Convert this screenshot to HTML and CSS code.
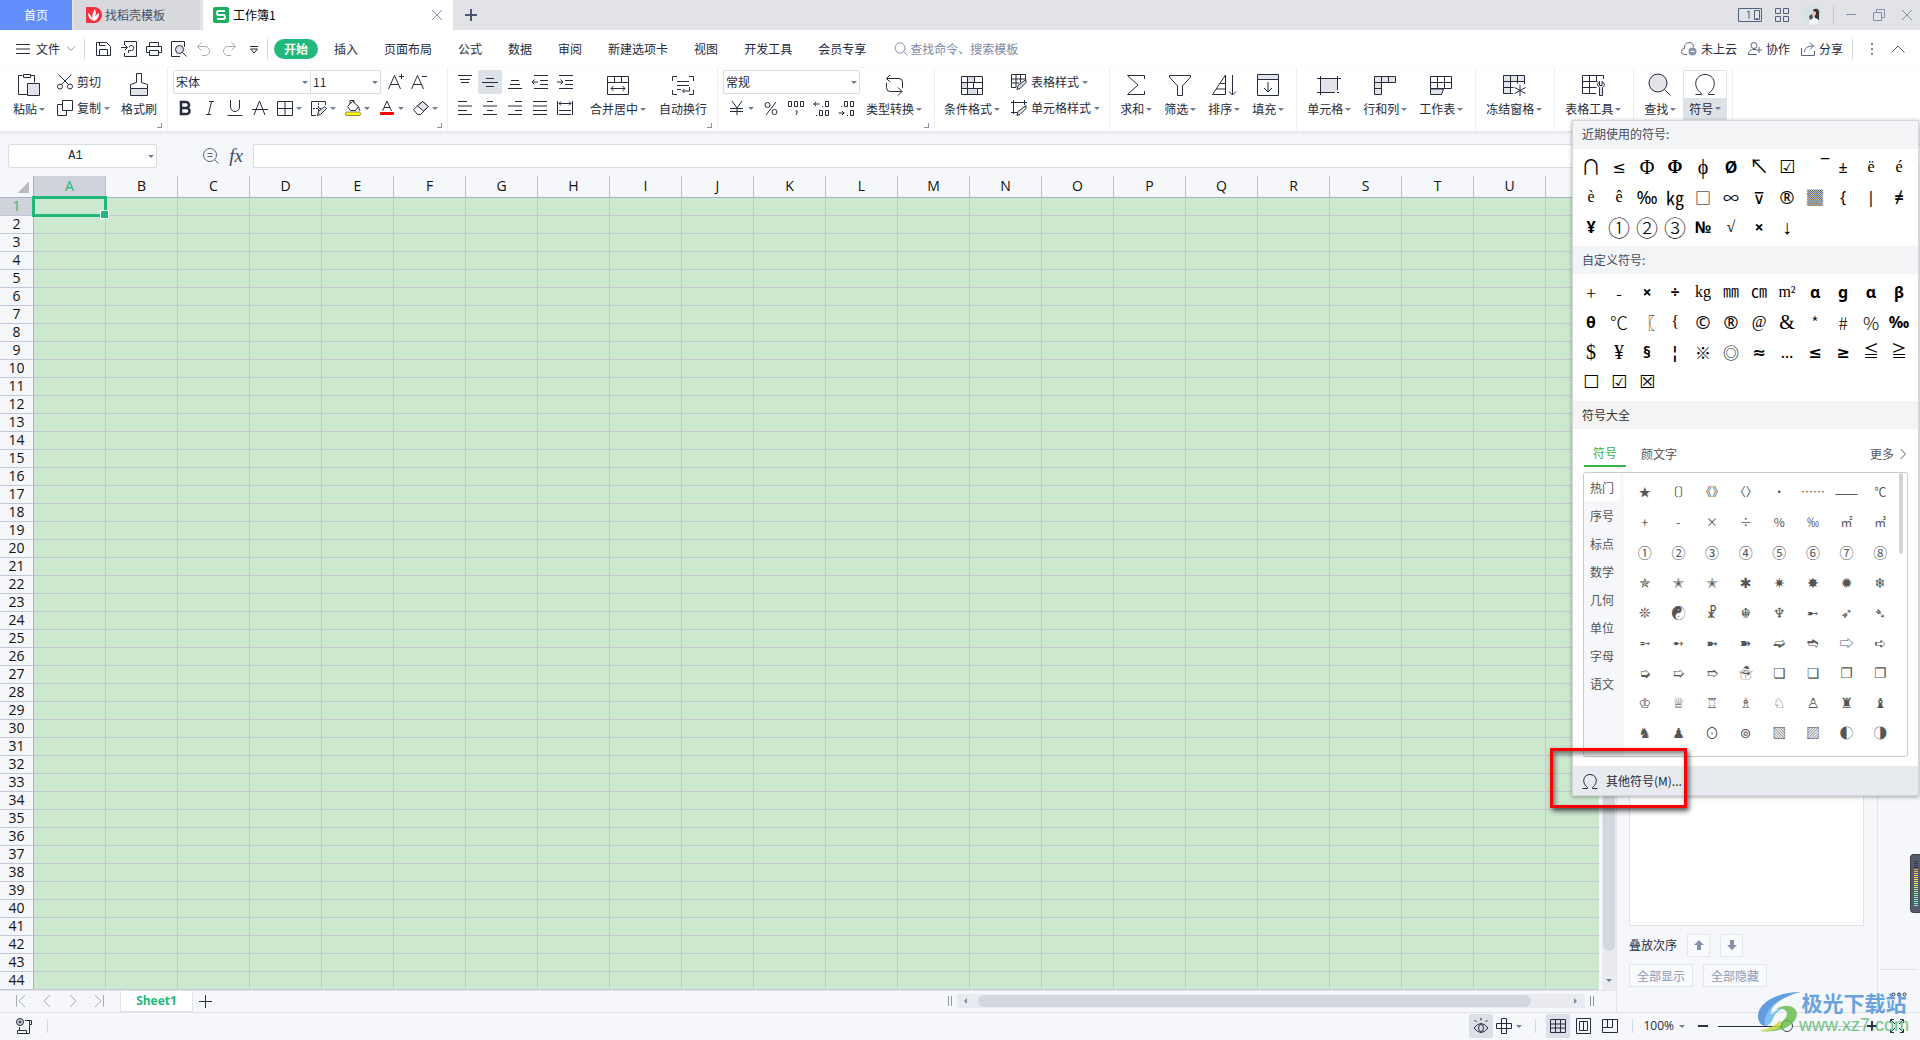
FILE: index.html
```html
<!DOCTYPE html>
<html lang="zh-CN">
<head>
<meta charset="utf-8">
<title>工作簿1</title>
<link rel="stylesheet" href="styles.css">
</head>
<body>
<div class="app">
  <header class="titlebar">
    <button class="tab tab-home">首页</button>
    <button class="tab tab-docer">
      <svg width="16" height="16" viewBox="0 0 16 16"><path d="M0 0h8a8 8 0 0 1 8 8 8 8 0 0 1-8 8H1a1 1 0 0 1-1-1z" fill="#f0303c"/><path d="M7 14C5 11 7 5 9 2c1 3 1 5 0 8 1-2 2-3 4-4 0 4-2 8-6 8zM6 13C3 12 2 9 2 6c2 1 4 3 4 7z" fill="#fff"/></svg>
      找稻壳模板</button>
    <button class="tab tab-book">
      <svg width="16" height="16" viewBox="0 0 16 16"><rect width="16" height="16" rx="2" fill="#18b05a"/><path d="M12 4H5.500Q4 4 4 6t1.500 2h5Q12 8 12 10t-1.500 2H4" fill="none" stroke="#fff" stroke-width="2"/></svg>
      <span class="tab-name">工作簿1</span>
      <svg class="thin" width="12" height="12" viewBox="0 0 12 12"><path d="M1 1l10 10M11 1L1 11"/></svg></button>
    <button class="add-tab" aria-label="新建"><svg width="12" height="12" viewBox="0 0 12 12"><path d="M6 0v12M0 6h12" stroke="#4b5773" stroke-width="2"/></svg></button>
    <div class="window-tools">
      <button aria-label="窗口"><svg width="24" height="14" viewBox="0 0 24 14"><path d="M.5.500h23v13H.500zM16.500 2.500h5v9h-5zM18 10.500h2M9 4l2-1v8" fill="none" stroke="#50607f"/></svg></button>
      <button aria-label="应用"><svg width="14" height="14" viewBox="0 0 14 14"><path d="M.5.500h5v5h-5zM8.500.500h5v5h-5zM.500 8.500h5v5h-5zM8.500 8.500h5v5h-5z" fill="none" stroke="#50607f"/></svg></button>
      <button aria-label="账号"><svg width="20" height="20" viewBox="0 0 20 20"><circle cx="10" cy="10" r="10" fill="#d5e2e6"/><path d="M11 5c4-3 7 0 6 4v6h-4c1-3-1-4-2-6z" fill="#3b3136"/><path d="M10 7c1-2 4-1 4 1s-2 4-3 3z" fill="#e9c3b4"/><path d="M7 19c0-4 3-6 6-6l3 1v4q-4 3-9 1z" fill="#f4f6f8"/><path d="M7 11l3-2 1 4-3 2z" fill="#554854"/></svg></button>
      <span class="divider"></span>
      <button aria-label="最小化"><svg class="thin" width="12" height="12" viewBox="0 0 12 12"><path d="M1 5.500h10"/></svg></button>
      <button aria-label="还原"><svg class="thin" width="12" height="12" viewBox="0 0 12 12"><path d="M.500 3.500h8v8h-8zM3.500 3.500v-3h8v8h-3"/></svg></button>
      <button aria-label="关闭"><svg class="thin" width="12" height="12" viewBox="0 0 12 12"><path d="M1 1l10 10M11 1L1 11"/></svg></button>
    </div>
  </header>

  <nav class="menubar">
    <button class="file-menu"><svg class="ink" width="14" height="10" viewBox="0 0 14 10"><path d="M0 .500h14M0 5h14M0 9.500h14"/></svg>文件
      <svg class="thin" width="10" height="6" viewBox="0 0 10 6"><path d="M1 .500l4 4 4-4"/></svg></button>
    <span class="divider"></span>
    <div class="quick">
      <button aria-label="保存"><svg class="ink" width="16" height="16" viewBox="0 0 16 16"><path d="M.500 1.500h10l4 4v9h-14zM3.500 14.500v-6h8v6M3.500 1.500v3h6"/></svg></button>
      <button aria-label="输出为PDF"><svg class="ink" width="16" height="16" viewBox="0 0 16 16"><path d="M3.500 4v-3.500h12v15h-12v-3.500M0 6.500h6M4 4l2.500 2.500L4 9M7.500 12V9.500h3a2.500 2.500 0 1 0-2.500-3.500"/></svg></button>
      <button aria-label="打印"><svg class="ink" width="16" height="16" viewBox="0 0 16 16"><path d="M3.500 5.500v-4h9v4M3.500 11.500h-3v-6h15v6h-3M3.500 9.500h9v5h-9z"/></svg></button>
      <button aria-label="打印预览"><svg class="ink" width="16" height="16" viewBox="0 0 16 16"><path d="M13.500 6V.500H.500v15H9"/><circle cx="8.500" cy="8.500" r="4" fill="#e2e4e8"/><path d="M11.500 11.500l4 4"/></svg></button>
      <button aria-label="撤销"><svg class="grey" width="16" height="16" viewBox="0 0 16 16"><path d="M5.500 1.500l-4 4 4 4M2 5.500h7a4.500 4.500 0 0 1 0 9H6"/></svg></button>
      <button aria-label="恢复"><svg class="grey" width="16" height="16" viewBox="0 0 16 16"><path d="M10.500 1.500l4 4-4 4M14 5.500H7a4.500 4.500 0 0 0 0 9h3"/></svg></button>
      <button aria-label="自定义快速访问"><svg class="ink" width="16" height="16" viewBox="0 0 16 16"><path d="M4 5.500h8M4.500 8l3.500 4 3.500-4z"/></svg></button>
    </div>
    <span class="divider"></span>
    <div class="tabs">
      <button class="active">开始</button><button>插入</button><button>页面布局</button><button>公式</button><button>数据</button><button>审阅</button><button>新建选项卡</button><button>视图</button><button>开发工具</button><button>会员专享</button>
    </div>
    <label class="search"><svg class="thin" width="14" height="14" viewBox="0 0 14 14"><circle cx="6" cy="6" r="5"/><path d="M9.500 9.500l4 4"/></svg><input type="text" placeholder="查找命令、搜索模板" aria-label="查找命令"></label>
    <div class="share-tools">
      <button><svg class="mid" width="16" height="14" viewBox="0 0 16 14"><path d="M6 12.500H3.500a3 3 0 0 1 0-6C3 2 6 .500 8 .500c3 0 4.500 2 4.500 4.500"/><circle cx="11.500" cy="9.500" r="4" fill="#8b96ad" stroke="none"/><path d="M9.500 9.500h4" stroke="#fff"/></svg>未上云</button>
      <button><svg class="mid" width="14" height="14" viewBox="0 0 14 14"><circle cx="6" cy="3.500" r="3"/><path d="M9 12.500H.500c0-4 2-5 5.500-5h2M11 5v6M8 8h6"/></svg>协作</button>
      <button><svg class="mid" width="14" height="14" viewBox="0 0 14 14"><path d="M.500 6v7.500h13V9M3.500 10c0-4 3-6 9-6M9 .500L12.500 4 9 7.500"/></svg>分享</button>
      <span class="divider"></span>
      <button aria-label="更多选项"><svg width="4" height="12" viewBox="0 0 4 12"><path d="M1 0h2v2H1zM1 5h2v2H1zM1 10h2v2H1z" fill="#7c8496"/></svg></button>
      <button aria-label="收起功能区"><svg class="mid" width="14" height="8" viewBox="0 0 14 8"><path d="M.500 7.500L7 1l6.500 6.500"/></svg></button>
    </div>
  </nav>

  <section class="ribbon">
    <div class="group g-clip">
      <button class="big"><svg class="ink" width="24" height="24" viewBox="0 0 24 24"><path d="M10 21.500H1.500v-19h4M13.500 2.500h4v7M6.500 1.500h7v3h-7z"/><path d="M10.500 10.500h12v12h-12z" fill="#e2e4e8"/></svg><span class="lbl">粘贴<i class="caret"></i></span></button>
      <div class="stack">
        <button class="small"><svg class="ink" width="16" height="16" viewBox="0 0 16 16"><circle cx="3" cy="12.500" r="2.500"/><circle cx="13" cy="12.500" r="2.500"/><path d="M1.500.500l10 10M14.500.500l-10 10"/></svg>剪切</button>
        <button class="small"><svg class="ink" width="16" height="16" viewBox="0 0 16 16"><path d="M5.500.500h10v10h-10zM5.500 4.500h-5v11h9v-5"/></svg>复制<i class="caret"></i></button>
      </div>
      <button class="big"><svg class="ink" width="24" height="24" viewBox="0 0 24 24"><path d="M3.500 15.500h17v7h-17z" fill="#e2e4e8"/><path d="M9.500 9.500v-9h5v9l6 2v4h-17v-4z"/></svg><span class="lbl">格式刷</span></button>
      <i class="corner"></i>
    </div>

    <div class="group g-font">
      <div class="stack">
        <div class="row">
          <select class="combo font-name" aria-label="字体"><option>宋体</option></select><select class="combo font-size" aria-label="字号"><option>11</option></select>
          <button aria-label="增大字号"><svg class="ink" width="16" height="16" viewBox="0 0 16 16"><path d="M.500 15L6.500 1.500 12.500 15M2.500 10.500h8M13.500 0v5M11 2.500h5"/></svg></button>
          <button aria-label="减小字号"><svg class="ink" width="16" height="16" viewBox="0 0 16 16"><path d="M.500 15L6.500 1.500 12.500 15M2.500 10.500h8M11 2.500h5"/></svg></button>
        </div>
        <div class="row icons">
          <button aria-label="加粗"><svg width="16" height="16" viewBox="0 0 16 16"><path d="M4 2h5a3 3 0 0 1 0 6H4zM4 8h5.500a3 3 0 0 1 0 6H4z" fill="none" stroke="#262b3d" stroke-width="2.500"/></svg></button>
          <button aria-label="倾斜"><svg class="ink" width="16" height="16" viewBox="0 0 16 16"><path d="M7 1.500h5M4 14.500h5M9.500 1.500l-3 13"/></svg></button>
          <button aria-label="下划线"><svg class="ink" width="16" height="16" viewBox="0 0 16 16"><path d="M3.500 0v7a4.500 4.500 0 0 0 9 0V0M.500 15.500h15"/></svg></button>
          <button aria-label="删除线"><svg class="ink" width="16" height="16" viewBox="0 0 16 16"><path d="M2 15L7.500 1 13 15M0 9.500h16"/></svg></button>
          <button aria-label="边框"><svg class="ink" width="16" height="16" viewBox="0 0 16 16"><path d="M.500 1.500h15v14h-15zM8 1.500v14M.500 8.500h15"/></svg><i class="caret"></i></button>
          <button aria-label="绘图边框"><svg class="ink" width="16" height="16" viewBox="0 0 16 16"><path d="M14.500 5V1.500H.500v14H5"/><path d="M7.500 3v8M2 8.500h8" stroke-dasharray="2 1"/><path d="M6.500 15.500l1-4 6-5 2 2-6 6z" fill="#e2e4e8"/></svg><i class="caret"></i></button>
          <button aria-label="填充颜色"><svg class="ink" width="16" height="16" viewBox="0 0 16 16"><path d="M2.500 6.500l5-5 6 5-3 4h-5zM5 4V.500h4V3M13.500 7l1.500 4"/><rect x=".500" y="12" width="15" height="3.500" rx="1.500" fill="#ff0" stroke="#8b8f50"/></svg><i class="caret"></i></button>
          <button aria-label="字体颜色"><svg class="ink" width="16" height="16" viewBox="0 0 16 16"><path d="M3.500 11L8 1l4.500 10M5 7.500h6"/><rect x="1" y="12" width="14" height="3" rx="1" fill="red" stroke="none"/></svg><i class="caret"></i></button>
          <button aria-label="清除"><svg class="ink" width="16" height="16" viewBox="0 0 16 16"><path d="M.500 9.500l9-8 6 5-8 8h-3z"/><path d="M4.500 6l5-4.500 6 5-5 4.500z" fill="#e2e4e8"/></svg><i class="caret"></i></button>
        </div>
      </div>
      <i class="corner"></i>
    </div>

    <div class="group g-align">
      <div class="stack">
        <div class="row icons">
          <button aria-label="顶端对齐"><svg class="ink" width="16" height="16" viewBox="0 0 16 16"><path d="M1 1.500h14M3 5.500h10M4 8.500h8"/></svg></button>
          <button class="pressed" aria-label="垂直居中"><svg class="ink" width="16" height="16" viewBox="0 0 16 16"><path d="M4 4.500h8M0 8.500h16M4 12.500h8"/></svg></button>
          <button aria-label="底端对齐"><svg class="ink" width="16" height="16" viewBox="0 0 16 16"><path d="M4 6.500h8M3 10.500h10M1 14.500h14"/></svg></button>
          <button aria-label="减少缩进"><svg class="ink" width="16" height="16" viewBox="0 0 16 16"><path d="M2 1.500h14M8 6.500h8M8 10.500h8M2 14.500h14M0 8h6M2.500 5.500L0 8l2.500 2.500"/></svg></button>
          <button aria-label="增加缩进"><svg class="ink" width="16" height="16" viewBox="0 0 16 16"><path d="M2 1.500h14M8 6.500h8M8 10.500h8M2 14.500h14M0 8h6M3.500 5.500L6 8l-2.500 2.500"/></svg></button>
        </div>
        <div class="row icons">
          <button aria-label="左对齐"><svg class="ink" width="16" height="16" viewBox="0 0 16 16"><path d="M1 1.500h9M1 6h14M1 10.500h9M1 14.500h14"/></svg></button>
          <button aria-label="水平居中"><svg class="ink" width="16" height="16" viewBox="0 0 16 16"><path d="M5 1.500h6M1 6h14M5 10.500h6M1 14.500h14"/></svg></button>
          <button aria-label="右对齐"><svg class="ink" width="16" height="16" viewBox="0 0 16 16"><path d="M8 1.500h7M1 6h14M8 10.500h7M1 14.500h14"/></svg></button>
          <button aria-label="两端对齐"><svg class="ink" width="16" height="16" viewBox="0 0 16 16"><path d="M1 1.500h14M1 6h14M1 10.500h14M1 14.500h14"/></svg></button>
          <button aria-label="分散对齐"><svg class="ink" width="16" height="16" viewBox="0 0 16 16"><path d="M.500 1v14M15.500 1v14M2 3.500h12M4 1.500l-2 2 2 2M12 1.500l2 2-2 2M2 10.500h12M2 14.500h12"/></svg></button>
        </div>
      </div>
      <button class="big merge"><svg class="ink" width="24" height="24" viewBox="0 0 24 24"><path d="M1.500 3.500h21v18h-21zM1.500 9.500h21M8.500 3.500v6M15.500 3.500v6M5 15.500h14M7.500 13L5 15.500 7.500 18M16.500 13l2.500 2.500-2.500 2.500"/></svg><span class="lbl">合并居中<i class="caret"></i></span></button>
      <button class="big"><svg class="ink" width="24" height="24" viewBox="0 0 24 24"><path d="M1.500 8V3.500H6M18 3.500h4.500V8M22.500 17v4.500H18M6 21.500H1.500V17M6 8.500h12M6 12.500h12M6 16.500h4M18.500 14v4h-7M13.500 16l-2 2 2 2"/></svg><span class="lbl">自动换行</span></button>
      <i class="corner"></i>
    </div>

    <div class="group g-number">
      <div class="stack">
        <select class="combo number-format" aria-label="数字格式"><option>常规</option></select>
        <div class="row icons">
          <button aria-label="货币"><svg class="ink" width="16" height="16" viewBox="0 0 16 16"><path d="M3 1l5 7 5-7M1 8.500h13M1 11.500h13M8 8v7"/></svg><i class="caret"></i></button>
          <button aria-label="百分比"><svg class="ink" width="16" height="16" viewBox="0 0 16 16"><circle cx="4.500" cy="5" r="2.500"/><circle cx="11.500" cy="12" r="2.500"/><path d="M13 2L3 15"/></svg></button>
          <button aria-label="千位分隔"><svg class="ink" width="16" height="16" viewBox="0 0 16 16"><path d="M.500 1.500h3v5h-3zM6.500 1.500h3v5h-3zM12.500 1.500h3v5h-3zM7.500 11h1.500v2l-1 2"/></svg></button>
          <button aria-label="增加小数位"><svg class="ink" width="16" height="16" viewBox="0 0 16 16"><path d="M.500 4h6M3 2L1 4l2 2M9 6.500h1M12.500 1.500h3v5h-3zM3 15.500h1M6.500 10.500h3v5h-3zM12.500 10.500h3v5h-3z"/></svg></button>
          <button aria-label="减少小数位"><svg class="ink" width="16" height="16" viewBox="0 0 16 16"><path d="M3 6.500h1M6.500 1.500h3v5h-3zM12.500 1.500h3v5h-3zM.500 13h6M4 11l2 2-2 2M9 15.500h1M12.500 10.500h3v5h-3z"/></svg></button>
        </div>
      </div>
      <button class="big"><svg class="ink" width="24" height="24" viewBox="0 0 24 24"><path d="M8 2L4.500 5.500 8 9M5 5.500h12q3.500 0 3.500 3.500v6M16 14.500l4 4-4 4M20 18.500H8q-3.500 0-3.500-4V10"/></svg><span class="lbl">类型转换<i class="caret"></i></span></button>
      <i class="corner"></i>
    </div>

    <div class="group g-style">
      <button class="big"><svg class="ink" width="24" height="24" viewBox="0 0 24 24"><path d="M8 3h7v6H8zM2 9h5v6H2zM8 15h8v6H8z" fill="#dcdee3" stroke="none"/><path d="M1.500 3.500h21v18h-21zM1.500 9.500h21M1.500 15.500h21M7.500 3.500v18M14.500 3.500v6M17.500 15.500v6M13.500 9.500v6"/></svg><span class="lbl">条件格式<i class="caret"></i></span></button>
      <div class="stack">
        <button class="small"><svg class="ink" width="16" height="16" viewBox="0 0 16 16"><path d="M14.500 5V.500H.500v13H5M.500 5h14M.500 9h8M5 .500v13M9.500.500v8"/><path d="M6 15.500l1-4 8-6v3l-6 6z" fill="#e2e4e8"/></svg>表格样式<i class="caret"></i></button>
        <button class="small"><svg class="ink" width="16" height="16" viewBox="0 0 16 16"><path d="M0 2.500h16M2.500 0v14M13.500 0v5M0 12.500h6"/><path d="M6 15.500l1-4 8-6v3l-6 6z" fill="#e2e4e8"/></svg>单元格样式<i class="caret"></i></button>
      </div>
    </div>

    <div class="group g-edit">
      <button class="big"><svg class="ink" width="24" height="24" viewBox="0 0 24 24"><path d="M20.500 6V2.500h-17L14 12 3.500 21.500h17V18"/></svg><span class="lbl">求和<i class="caret"></i></span></button>
      <button class="big"><svg class="ink" width="24" height="24" viewBox="0 0 24 24"><path d="M1.500 2.500h21V4L14.500 13v9.500h-5V13L1.500 4z"/></svg><span class="lbl">筛选<i class="caret"></i></span></button>
      <button class="big"><svg class="ink" width="24" height="24" viewBox="0 0 24 24"><path d="M.500 21.500L13.500 2v19.500zM4.500 16h9M8 10.500h5.500M20.500 2v20M17 18.500l3.500 3.500 3.500-3.500"/></svg><span class="lbl">排序<i class="caret"></i></span></button>
      <button class="big"><svg class="ink" width="24" height="24" viewBox="0 0 24 24"><path d="M1.500 1.500h21v5h-21z" fill="#e2e4e8"/><path d="M1.500 6.500h21v16h-21zM12 9v10M8 15l4 4 4-4"/></svg><span class="lbl">填充<i class="caret"></i></span></button>
    </div>

    <div class="group g-edit">
      <button class="big"><svg class="ink" width="24" height="24" viewBox="0 0 24 24"><path d="M4 6h17v13H4z" fill="#e2e4e8" stroke="none"/><path d="M0 5.500h24M3.500 3v19M20.500 3v14M0 19.500h18M20 19.500h2"/></svg><span class="lbl">单元格<i class="caret"></i></span></button>
      <button class="big"><svg class="ink" width="24" height="24" viewBox="0 0 24 24"><path d="M1.500 3.500h21v6h-14v12h-7z" fill="#e2e4e8"/><path d="M8.500 3.500v6M15.500 3.500v6M1.500 9.500h7M1.500 15.500h7"/></svg><span class="lbl">行和列<i class="caret"></i></span></button>
      <button class="big"><svg class="ink" width="24" height="24" viewBox="0 0 24 24"><path d="M1.500 16h13l-2 5.500h-11z" fill="#e2e4e8"/><path d="M1.500 3.500h21v12h-21zM1.500 9.500h21M8.500 3.500v12M15.500 3.500v12"/></svg><span class="lbl">工作表<i class="caret"></i></span></button>
    </div>

    <div class="group g-edit">
      <button class="big"><svg class="ink" width="24" height="24" viewBox="0 0 24 24"><path d="M1 3h21v6H8v12H1z" fill="#e2e4e8" stroke="none"/><path d="M22.500 11V2.500h-21v18H11M1.500 8.500h21M1.500 14.500h10M8.500 2.500v18M15.500 2.500v8M18 12v11M12.500 14.500l11 6M23.500 14.500l-11 6"/></svg><span class="lbl">冻结窗格<i class="caret"></i></span></button>
    </div>
    <div class="group g-edit">
      <button class="big"><svg class="ink" width="24" height="24" viewBox="0 0 24 24"><path d="M22.500 6V2.500h-21v18H15M1.500 8.500h15M1.500 14.500h14M8.500 2.500v18M15.500 2.500v6"/><path d="M18.500 22.500v-8c-3-2-2-5 0-6v4h2.500v-4c3 1 3 5 .500 6v8z" fill="#e2e4e8"/></svg><span class="lbl">表格工具<i class="caret"></i></span></button>
    </div>
    <div class="group g-symbol">
      <button class="big"><svg class="ink" width="24" height="24" viewBox="0 0 24 24"><circle cx="10" cy="10" r="9" fill="#e2e4e8"/><path d="M16.500 16.500l6 6"/></svg><span class="lbl">查找<i class="caret"></i></span></button>
      <button class="big open"><svg class="ink" width="24" height="24" viewBox="0 0 24 24"><path d="M2.500 21.500h6v-1C-1 14 2 1.500 12 1.500S25 14 15.500 20.500v1h6"/></svg><span class="lbl">符号<i class="caret"></i></span></button>
    </div>
  </section>

  <div class="formula-bar">
    <input class="name-box" type="text" value="A1" aria-label="名称框">
    <svg class="mid lookup" width="16" height="16" viewBox="0 0 16 16"><circle cx="7" cy="7" r="6.500"/><path d="M4.500 5.500h5M4.500 8.500h5M11.500 11.500l4 4"/></svg>
    <button class="fx" aria-label="插入函数">fx</button>
    <input class="formula" type="text" aria-label="编辑栏">
  </div>

  <main class="work">
    <section class="sheet">
      <div class="sheet-body">
        <div class="grid-wrap"><table class="grid"><thead><tr id="cols"><th class="select-all"></th></tr></thead><tbody id="rows"></tbody></table></div>
        <div class="vscroll"><span class="thumb"></span><i class="caret"></i></div>
      </div>
      <div class="sheet-bar">
        <div class="sheet-nav">
          <button aria-label="第一个"><svg class="grey" width="10" height="12" viewBox="0 0 10 12"><path d="M.500 0v12M9 0L3 6l6 6"/></svg></button>
          <button aria-label="上一个"><svg class="grey" width="10" height="12" viewBox="0 0 10 12"><path d="M8 0L2 6l6 6"/></svg></button>
          <button aria-label="下一个"><svg class="grey" width="10" height="12" viewBox="0 0 10 12"><path d="M2 0l6 6-6 6"/></svg></button>
          <button aria-label="最后一个"><svg class="grey" width="10" height="12" viewBox="0 0 10 12"><path d="M9.500 0v12M1 0l6 6-6 6"/></svg></button>
        </div>
        <button class="sheet-tab">Sheet1</button>
        <button class="add-sheet" aria-label="新建工作表"><svg class="ink" width="13" height="13" viewBox="0 0 13 13"><path d="M6.500 0v13M0 6.500h13"/></svg></button>
        <div class="hscroll-area"><i class="grip"></i><div class="hscroll"><i class="left"></i><span class="thumb"></span><i class="right"></i></div><i class="grip"></i></div>
      </div>
    </section>
    <aside class="pane">
      <div class="object-list"></div>
      <div class="order"><span>叠放次序</span>
        <button aria-label="上移"><svg width="10" height="10" viewBox="0 0 10 10"><path d="M5 0l5 5H7v5H3V5H0z" fill="#8792a6"/></svg></button>
        <button aria-label="下移"><svg width="10" height="10" viewBox="0 0 10 10"><path d="M5 10l5-5H7V0H3v5H0z" fill="#8792a6"/></svg></button></div>
      <div class="visibility"><button>全部显示</button><button>全部隐藏</button></div>
    </aside>
    <aside class="strip"><button aria-label="更多"><svg class="ink" width="16" height="5" viewBox="0 0 16 5"><circle cx="2.500" cy="2.500" r="1.500"/><circle cx="8" cy="2.500" r="1.500"/><circle cx="13.500" cy="2.500" r="1.500"/></svg></button></aside>
  </main>

  <footer class="status">
    <button class="record" aria-label="录制"><svg class="ink" width="16" height="16" viewBox="0 0 16 16"><circle cx="4" cy="4" r="3.500" fill="#cfd3db"/><circle cx="4" cy="4" r="1"/><path d="M9 2.500h6.500v4h-2v9h-12v-3h9v3M3.500 9v3.500M13.500 6.500v-4"/></svg></button>
    <span class="divider"></span>
    <div class="view-tools">
      <button class="on" aria-label="护眼模式"><svg class="ink" width="16" height="16" viewBox="0 0 16 16"><path d="M1 10q7-9 14 0-7 9-14 0zM8 0v2.500M1.500 2l2 2M14.500 2l-2 2"/><ellipse cx="8" cy="10" rx="2.500" ry="3.500"/></svg></button>
      <button class="cross" aria-label="阅读模式"><svg class="ink" width="16" height="16" viewBox="0 0 16 16"><path d="M5.500.500h5v15h-5zM.500 5.500h15v5H.500z"/></svg><i class="caret"></i></button>
      <span class="divider"></span>
      <button class="on" aria-label="普通视图"><svg class="ink" width="16" height="14" viewBox="0 0 16 14"><path d="M.500.500h15v13H.500zM.500 5h15M.500 9h15M5.500.500v13M10.500.500v13"/></svg></button>
      <button aria-label="分页预览"><svg class="ink" width="16" height="16" viewBox="0 0 16 16"><path d="M.500.500h14v15H.500zM3.500 3.500h8v9h-8zM7.500 3.500v9"/></svg></button>
      <button aria-label="页面布局"><svg class="ink" width="16" height="14" viewBox="0 0 16 14"><path d="M.500.500h15v13H.500zM5.500.500v8M10.500.500v8M.500 8.500h10"/></svg></button>
      <span class="divider before-zoom"></span>
      <button class="zoom">100%<i class="caret"></i></button>
      <button class="minus" aria-label="缩小"><svg width="10" height="10" viewBox="0 0 10 10"><path d="M0 5h10" stroke="#2b3349" stroke-width="2"/></svg></button>
      <input type="range" min="0" max="100" value="46" aria-label="缩放">
      <button aria-label="放大"><svg width="10" height="10" viewBox="0 0 10 10"><path d="M0 5h10M5 0v10" stroke="#2b3349" stroke-width="2"/></svg></button>
      <button class="full" aria-label="全屏"><svg class="ink" width="14" height="14" viewBox="0 0 14 14"><path d="M.500 4V.500H4M10 .500h3.500V4M13.500 10v3.500H10M4 13.500H.500V10M1 1l4 4M13 1L9 5M1 13l4-4M13 13L9 9"/></svg></button>
    </div>
  </footer>

  <div class="popup">
    <h2>近期使用的符号:</h2>
    <div class="symbols" id="recent"></div>
    <h2>自定义符号:</h2>
    <div class="symbols" id="custom"></div>
    <h2 class="all-title">符号大全</h2>
    <div class="lib-tabs"><button class="current">符号</button><button>颜文字</button><a href="#more">更多<svg width="6" height="12" viewBox="0 0 6 12"><path d="M.500 1l5 5-5 5" fill="none" stroke="#666"/></svg></a></div>
    <div class="library">
      <div class="cats"><button class="current">热门</button><button>序号</button><button>标点</button><button>数学</button><button>几何</button><button>单位</button><button>字母</button><button>语文</button></div>
      <div class="glyphs" id="glyphs"></div>
      <span class="lib-thumb"></span>
    </div>
    <button class="other"><svg class="ink" width="16" height="16" viewBox="0 0 16 16"><path d="M.500 15.500h5v-1C-1 9.500 1.500 1.500 8 1.500S17 9.500 10.500 14.500v1h5"/></svg>其他符号(M)...</button>
    <span class="marker"></span>
  </div>

  <div class="meter"><i></i></div>
  <div class="watermark">
    <svg width="44" height="42" viewBox="0 0 44 42"><path d="M43 1C20 1 1 12 1 25c0 6 3 10 8 10C5 24 17 8 43 1z" fill="#3f87d9"/><path d="M43 1C26 5 13 14 14 24c4-5 10-8 16-9-8 4-13 8-14 13-1 3-4 6-7 7C5 20 20 6 43 1z" fill="#62b4ee"/><path d="M19 18c14-8 24 0 20 9C35 37 19 42 3 40c13-3 26-9 27-17 0-4-4-6-11-5z" fill="#62bb46"/><path d="M3 40c11-3 16-6 20-11l1 6c-5 4-13 6-21 5z" fill="#c6d93a"/></svg>
    <div><b>极光下载站</b><span>www.xz7.com</span></div>
  </div>
</div>
<script src="app.js"></script>
</body>
</html>
```
FILE: app.js
```js
const el = (tag, cls, text) => {
  const node = document.createElement(tag);
  if (cls) node.className = cls;
  if (text) node.textContent = text;
  return node;
};

// Sheet grid
const letters = 'ABCDEFGHIJKLMNOPQRSTUV'.split('');
const cols = document.getElementById('cols');
letters.forEach((c, i) => cols.append(el('th', i ? '' : 'sel', c === 'V' ? '' : c)));
const rows = document.getElementById('rows');
for (let r = 1; r <= 44; r++) {
  const tr = el('tr');
  tr.append(el('th', r === 1 ? 'sel' : '', String(r)));
  letters.forEach((c, i) => tr.append(el('td', r === 1 && i === 0 ? 'cursor' : '')));
  rows.append(tr);
}

// Symbol lists, "glyph/class": s serif, sl large serif, n sans, b bold, l circled, m plain, w fullwidth
const fill = (id, list) => {
  const box = document.getElementById(id);
  list.split(' ').forEach(item => {
    const [text, cls] = item.split('/');
    box.append(el('button', cls, text));
  });
};
fill('recent', '∩/big-n ≤/n Φ/sl Φ/sb ϕ/sl Ø/b ↖/sl ☑/box ‾/top ±/n ë/s é/s ' +
  'è/s ê/s ‰/n2 ㎏/kg □/m ∞/m ⊽/m ®/n2 ▓/m {/n |/n ≠/b ¥/b ①/l ②/l ③/l №/b √/s ×/b ↓/sl');
fill('custom', '+/w -/w ×/b ÷/b kg/s ㎜/s ㎝/s m²/s ɑ/b ɡ/b α/b β/b ' +
  'θ/b ℃/w 〖/m {/s ©/n2 ®/n2 @/s &/sl */w #/w %/w ‰/b ' +
  '$/sl ¥/sl §/b ¦/b ※/m ◎/m ≈/b …/n ≤/b ≥/b ≦/s ≧/s ☐/box ☑/box ☒/box');
fill('glyphs', '★ 〔〕 《》 〈〉 · …… ——/dash ℃ + - × ÷ % ‰ ㎡ ㎥ ① ② ③ ④ ⑤ ⑥ ⑦ ⑧ ✯ ✭ ✭ ✱ ✷ ✸ ✹ ❄ ' +
  '❊ ☯ ☧ ☬ ♆ ➸ ➶ ➴ ➵ ➻ ➼ ➽ ➫ ➬ ⇨ ➪ ➭ ➯ ➱ ☃ ❏ ❏ ❐ ❐ ♔ ♕ ♖ ♗ ♘ ♙ ♜ ♝ ♞ ♟ ⊙ ⊚ ▧ ▨ ◐ ◑ ▬ ·');
```
FILE: styles.css
```css
* { box-sizing: border-box; }
body { margin: 0; overflow: hidden; color: #262b3d; font: 12px/16px "Noto Sans CJK SC", "Noto Sans", sans-serif; }
button, input, select { margin: 0; padding: 0; border: 0; background: none; color: inherit; font: inherit; outline: 0; }
button { display: flex; align-items: center; justify-content: center; white-space: nowrap; flex: none; }
svg { display: block; flex: none; overflow: visible; }
.ink { fill: none; stroke: #262b3d; }
.thin { fill: none; stroke: #8490ad; }
.mid { fill: none; stroke: #59637a; }
.grey { fill: none; stroke: #a9acb3; }
.app { position: relative; display: flex; flex-direction: column; height: 100vh; min-height: 700px; background: #f5f7fa; overflow: hidden; }
.divider { width: 1px; height: 20px; background: #d5d8de; flex: none; }
.caret { width: 0; height: 0; border: 3px solid transparent; border-top-color: #6f7c95; border-bottom: 0; flex: none; }

.titlebar { display: flex; height: 30px; background: #e2e3e7; flex: none; }
.tab-home { width: 72px; background: #618efb; color: #fff; }
.tab-docer { width: 126px; margin-left: 2px; padding-left: 12px; gap: 3px; justify-content: flex-start; background: #d8d9dc; color: #4a5062; }
.tab-book { width: 250px; margin-left: 3px; padding: 0 10px; gap: 4px; background: #fff; color: #000; }
.tab-name { flex: 1; text-align: left; }
.add-tab { width: 36px; }
.window-tools { display: flex; align-items: center; margin-left: auto; padding-right: 7px; gap: 13px; }
.window-tools .divider { margin: 0 -2px 0 -2px; background: #c6c9d0; }
.window-tools .divider ~ button + button { margin-left: 3px; }

.menubar { display: flex; align-items: center; height: 38px; padding-bottom: 1px; background: #fff; flex: none; }
.file-menu { gap: 6px; padding: 0 8px 0 16px; }
.quick { display: flex; gap: 9px; padding: 0 5px 0 11px; }
.tabs { display: flex; align-items: center; gap: 26px; margin-left: 6px; }
.tabs .active { width: 44px; height: 20px; margin-right: -10px; border-radius: 10px; background: #21b97b; color: #fff; font-weight: bold; }
.search { display: flex; align-items: center; gap: 2px; margin-left: 28px; }
.search input { width: 150px; }
.search input::placeholder { color: #7b88a5; opacity: 1; }
.share-tools { display: flex; align-items: center; gap: 11px; margin-left: auto; padding-right: 15px; }
.share-tools button { gap: 4px; }
.share-tools .divider { margin-left: -2px; }
.share-tools .divider + button { margin: 0 6px; }

.ribbon { display: flex; height: 64px; background: #fff; border-bottom: 1px solid #e3e5e9; box-shadow: 0 1px 3px #dfe2e7; flex: none; }
.group { position: relative; display: flex; align-items: flex-start; height: 62px; padding-top: 2px; border-right: 1px solid #eceef1; flex: none; }
.corner { position: absolute; right: 5px; bottom: 2px; width: 5px; height: 5px; border: solid #8791a8; border-width: 0 1px 1px 0; }
.big { flex-direction: column; height: 50px; padding-top: 3px; gap: 1px; }
.lbl { display: flex; align-items: center; gap: 2px; height: 22px; }
.stack { display: flex; flex-direction: column; gap: 2px; }
.stack > *, .row { height: 24px; }
.small { justify-content: flex-start; gap: 4px; }
.small .caret { margin-left: -1px; }
.row { display: flex; align-items: center; gap: 8px; }
.icons { gap: 9px; }
.icons button { gap: 3px; }
.icons .pressed { width: 24px; height: 24px; margin: 0 -4px; border-radius: 2px; background: #dce2e6; }
.g-clip { padding-left: 13px; padding-right: 10px; gap: 11px; }
.g-clip .stack { margin-left: 1px; }
.g-clip .small { gap: 4px; }
.g-font { padding-left: 5px; padding-right: 9px; }
.g-font .row { gap: 7px; }
.g-font .icons { gap: 9px; padding-left: 4px; }
.g-align { padding-left: 9px; padding-right: 10px; gap: 13px; }
.merge { margin-left: 4px; }
.g-number { padding-left: 5px; padding-right: 12px; gap: 6px; }
.g-number .icons { padding-left: 6px; }
.g-style { padding-left: 9px; padding-right: 9px; gap: 11px; }
.g-edit { padding-left: 10px; padding-right: 12px; gap: 12px; }
.g-symbol { padding-left: 10px; padding-right: 5px; gap: 7px; }
.open { width: 44px; border: 1px solid #dce2e6; padding-top: 2px; border-radius: 2px 2px 0 0; background: linear-gradient(#fff 27px, #dce2e6 27px); }
.combo, .name-box { height: 24px; border: 1px solid #d9dce2; border-radius: 2px; background: #fff url("data:image/svg+xml,%3Csvg xmlns='http://www.w3.org/2000/svg' width='6' height='3'%3E%3Cpath d='M0 0h6L3 3z' fill='%236f7c95'/%3E%3C/svg%3E") no-repeat right 2px center; }
.combo { appearance: none; padding-left: 2px; }
.font-name { width: 138px; border-radius: 2px 0 0 2px; }
.font-size { width: 71px; margin-left: -8px; border-radius: 0 2px 2px 0; }
.number-format { width: 137px; }

.formula-bar { display: flex; align-items: flex-start; height: 44px; padding: 12px 0 0 8px; flex: none; }
.name-box { width: 149px; padding-right: 14px; text-align: center; font-family: "Liberation Mono", monospace; }
.lookup { margin: 4px 0 0 46px; }
.fx { width: 34px; height: 24px; font: italic 19px "Liberation Serif", serif; color: #3e4860; }
.formula { flex: 1; height: 24px; border: 1px solid #d9dce2; border-right: 0; border-radius: 2px 0 0 2px; background: #fff; }

.work { display: flex; flex: 1; min-height: 0; }
.sheet { display: flex; flex-direction: column; flex: 1; min-width: 0; }
.sheet-body { display: flex; flex: 1; min-height: 0; }
.grid-wrap { flex: 1; overflow: hidden; }
.grid { width: 1618px; table-layout: fixed; border-collapse: separate; border-spacing: 0; font: 14px/16px "Open Sans", "Noto Sans", sans-serif; color: #111; }
.grid th, .grid td { width: 72px; height: 18px; padding: 0; border: solid #c3c8d9; border-width: 0 1px 1px 0; font-weight: normal; text-align: center; vertical-align: top; }
.grid td { background: #cce8cf; }
.grid thead th { height: 22px; line-height: 20px; border-bottom-color: #a9b0c6; border-right-color: #b9bfcf; }
.grid tr th:first-child { width: 34px; border-right-color: #a9b0c6; }
.grid th.select-all { border-right-color: transparent; background: linear-gradient(135deg, transparent 50%, #b9bbbf 50%) 18px 6px / 11px 11px no-repeat; }
.grid th.sel { background: #d0d3dc; color: #21b97b; }
.cursor { position: relative; }
.cursor::before { content: ""; position: absolute; inset: -2px; border: 3px solid #21b97b; }
.cursor::after { content: ""; position: absolute; right: -4px; bottom: -4px; width: 7px; height: 7px; border: 1px solid #fff; background: #21b97b; }
.vscroll { display: flex; flex-direction: column; align-items: center; width: 14px; margin-left: 3px; padding-bottom: 8px; background: #e9ebf0; flex: none; }
.vscroll .thumb { width: 12px; flex: 1; margin-bottom: 28px; border-radius: 6px; background: #d3d6df; }
.sheet-bar { display: flex; height: 22px; border-top: 1px solid #e1e3e8; flex: none; }
.sheet-nav { display: flex; gap: 16px; width: 120px; padding: 0 0 1px 16px; }
.sheet-tab { width: 73px; background: #fff; border: solid #e1e3e8; border-width: 0 1px 1px; color: #21b97b; font: bold 12px/20px "Open Sans", sans-serif; }
.add-sheet { width: 24px; padding-bottom: 1px; }
.hscroll-area { display: flex; align-items: center; gap: 5px; width: 668px; margin-left: auto; padding: 0 22px 1px 0; }
.grip { width: 4px; height: 10px; border: solid #8d98ae; border-width: 0 1px; }
.hscroll { display: flex; align-items: center; flex: 1; height: 14px; padding: 0 8px 0 7px; background: #e9ebf0; }
.hscroll .thumb { flex: 1; height: 12px; margin: 0 43px 0 11px; border-radius: 6px; background: #d5d7e0; }
.left, .right { border: 3px solid transparent; border-left: 0; border-right-color: #7f8cab; }
.right { border: 3px solid transparent; border-right: 0; border-left-color: #7f8cab; }
.pane { display: flex; flex-direction: column; gap: 8px; width: 262px; padding: 8px 13px 25px 12px; border: solid #e1e3e8; border-width: 0 1px; flex: none; }
.object-list { flex: 1; border: 1px solid #dfe2e8; border-radius: 2px; background: #fff; }
.order, .visibility { display: flex; align-items: center; gap: 10px; }
.order { height: 22px; }
.order button { width: 23px; height: 23px; border: 1px solid #e3e6ea; background: #f9fafc; }
.visibility button { width: 64px; height: 23px; border: 1px solid #e3e6ea; background: #f9fafc; color: #8f9bb0; }
.strip { display: flex; flex-direction: column; justify-content: flex-end; align-items: center; width: 42px; padding: 0 2px 16px; flex: none; }
.strip button { width: 38px; height: 27px; padding-top: 22px; border-top: 1px solid #e1e3e8; }

.status { display: flex; align-items: center; height: 28px; padding-bottom: 1px; border-top: 1px solid #e1e3e8; flex: none; }
.status .divider { height: 14px; }
.record { margin: 0 15px 0 16px; }
.view-tools { display: flex; align-items: center; gap: 10px; margin-left: auto; padding-right: 16px; }
.view-tools .on { width: 24px; height: 24px; margin-right: -4px; border-radius: 2px; background: #dbdfe7; }
.cross { gap: 4px; margin: 0 3px 0 -3px; }
.view-tools .before-zoom { margin-left: 4px; }
.zoom { gap: 5px; font-family: "Open Sans", sans-serif; }
.minus { margin-left: 3px; }
input[type=range] { appearance: none; width: 149px; height: 12px; margin-right: -10px; background: linear-gradient(90deg, #262b3d 46%, #c6ccd8 46%) center / 100% 1px no-repeat; }
input[type=range]::-webkit-slider-thumb { appearance: none; width: 12px; height: 12px; border: 1px solid #444; border-radius: 6px; background: #f5f7fa; }
.full { margin-left: 3px; }

.popup { position: absolute; top: 120px; right: 1px; width: 347px; border: 1px solid #d5d7db; background: #fff; box-shadow: 0 1px 4px rgba(0, 0, 0, .35); }
.popup h2 { margin: 0; height: 28px; padding: 4px 9px; background: #f3f4f6; color: #454d61; font-size: 12px; font-weight: normal; line-height: 20px; }
.popup h2:first-child { line-height: 18px; }
.popup h2.all-title { background: #f4f4f4; color: #333; }
.symbols { display: grid; grid-template-columns: repeat(12, 28px); grid-auto-rows: 30px; padding: 3px 4px 4px; }
.symbols button { color: #000; font-family: "Noto Sans CJK SC", "DejaVu Sans", sans-serif; font-size: 16px; }
.symbols .s, .symbols .sb, .symbols .sl { font-family: "Liberation Serif", "Noto Sans CJK SC", serif; }
.symbols .sb { font-size: 18px; font-weight: bold; }
.symbols .sl, .symbols .big-n { font-size: 20px; }
.symbols .l { padding-bottom: 2px; font-size: 22px; line-height: 22px; font-weight: 300; }
.symbols .n, .symbols .n2 { font-family: "Noto Sans", "DejaVu Sans", sans-serif; }
.symbols .n2 { font-size: 18px; }
.symbols .kg { font-size: 18px; }
.symbols .w { font-size: 18px; font-weight: 300; }
.symbols .top { padding: 0 0 8px 20px; }
.symbols .b { font-family: "Noto Sans", "DejaVu Sans", sans-serif; font-weight: bold; }
.symbols .box { font-family: "DejaVu Sans", sans-serif; font-size: 18px; }
.lib-tabs { display: flex; gap: 15px; height: 38px; padding: 0 12px 0 11px; color: #555; }
.lib-tabs button { padding-top: 12px; }
.lib-tabs .current { width: 42px; border-bottom: 2px solid #3bb044; color: #3bb044; }
.lib-tabs a { display: flex; align-items: center; gap: 6px; margin-left: auto; padding-top: 12px; color: inherit; text-decoration: none; }
.library { position: relative; display: flex; height: 285px; margin: 5px 10px 9px; border: 1px solid #c9cbcf; border-radius: 3px; overflow: hidden; color: #555; }
.cats { width: 40px; background: #f5f7fa; flex: none; }
.cats button { width: 36px; height: 28px; padding-top: 1px; }
.cats .current { background: #fff; }
.glyphs { display: grid; grid-template-columns: repeat(8, 1fr); grid-auto-rows: 30px; flex: 1; margin: 0 10px 0 4px; padding-top: 4px; font-family: "Noto Sans CJK SC", "DejaVu Sans", sans-serif; text-spacing-trim: space-all; }
.glyphs button { min-width: 0; }
.glyphs button:nth-child(n+17) { font-size: 14px; }
.glyphs .dash { font-size: 14px; }
.lib-thumb { position: absolute; top: 0; right: 4px; width: 4px; height: 81px; border-radius: 2px; background: #d3d4d6; }
.other { width: 100%; height: 29px; padding-left: 9px; gap: 8px; justify-content: flex-start; background: #e7eaef; }
.marker { position: absolute; left: -23px; bottom: -13px; width: 137px; height: 60px; border: 3px solid #f00; box-shadow: 2px 3px 5px rgba(0, 0, 0, .65), inset 2px 3px 5px rgba(0, 0, 0, .5); }

.meter { position: absolute; right: 0; bottom: 127px; width: 10px; height: 59px; padding: 6px 2px 6px 3px; border: 1px solid #3b4050; border-right: 0; border-radius: 4px 0 0 4px; background: #555b6b; }
.meter i { display: block; height: 100%; background: repeating-linear-gradient(transparent 0 1px, #555b6b 1px 2px), linear-gradient(#343846 16%, #ffa95c 18%, #ffe870 45%, #9af098 70%, #62f5e2); }
.watermark { position: absolute; right: 11px; bottom: 6px; display: flex; align-items: flex-start; opacity: .8; pointer-events: none; }
.watermark svg { margin: 3px -2px 0 0; }
.watermark div { display: flex; flex-direction: column; align-items: center; }
.watermark b { color: #478fd6; font-size: 21px; line-height: 28px; }
.watermark span { color: #58b766; font: 18px/18px "Liberation Sans", sans-serif; }
```
